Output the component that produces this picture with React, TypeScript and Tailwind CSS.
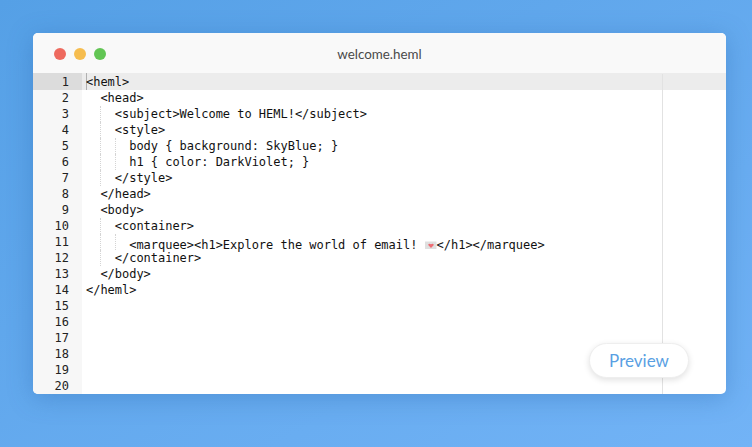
const mono = "font-['DejaVu_Sans_Mono',monospace]";

const lines: { indent: number; text: string; shift?: boolean; emoji?: string }[] = [
  { indent: 0, text: '<heml>' },
  { indent: 1, text: '<head>' },
  { indent: 2, text: '<subject>Welcome to HEML!</subject>' },
  { indent: 2, text: '<style>' },
  { indent: 3, text: 'body { background: SkyBlue; }' },
  { indent: 3, text: 'h1 { color: DarkViolet; }' },
  { indent: 2, text: '</style>' },
  { indent: 1, text: '</head>' },
  { indent: 1, text: '<body>' },
  { indent: 2, text: '<container>' },
  { indent: 3, text: '<marquee><h1>Explore the world of email! ', shift: true, emoji: '</h1></marquee>' },
  { indent: 2, text: '</container>' },
  { indent: 1, text: '</body>' },
  { indent: 0, text: '</heml>' },
];

const numbers = Array.from({ length: 20 }, (_, i) => i + 1);

function LoveLetter() {
  return (
    <svg width="12" height="9" viewBox="0 0 12 9" className="inline-block align-[-1px]">
      <rect x="0" y="0.5" width="11.5" height="7.5" fill="#dfdfdf" />
      <path d="M6 7 3.4 4.2c-.7-1 1-2.3 2.6-.9 1.6-1.4 3.3-.1 2.6.9z" fill="#ee6b73" />
    </svg>
  );
}

function CodeLine({ indent, text, shift, emoji }: (typeof lines)[number]) {
  return (
    <div className="flex h-4 items-stretch pl-1 whitespace-pre">
      {Array.from({ length: indent }, (_, i) => (
        <span
          key={i}
          className={i === 0 ? 'w-[14.4px] shrink-0' : 'w-[14.4px] shrink-0 border-l border-dotted border-[#d4d4d4]'}
        />
      ))}
      <span className={shift ? 'relative top-[3px]' : ''}>
        {text}
        {emoji && <LoveLetter />}
        {emoji}
      </span>
    </div>
  );
}

export default function App() {
  return (
    <div className="flex h-[447px] w-[752px] overflow-hidden bg-gradient-to-br from-[#55a0e6] to-[#72b3f6] pt-[33px] pl-[33px]">
      <div className="relative h-[361px] w-[693px] overflow-hidden rounded-[5px] bg-white shadow-[0_4px_24px_rgba(40,100,170,0.35)]">
        {/* TITLE BAR */}
        <div className="relative flex h-10 items-center justify-center bg-[#f9f9f9]">
          <div className="absolute top-[15px] left-[21px] flex gap-2">
            <span className="h-3 w-3 rounded-full bg-[#ee6a5f]" />
            <span className="h-3 w-3 rounded-full bg-[#f6bd4f]" />
            <span className="h-3 w-3 rounded-full bg-[#62c554]" />
          </div>
          <span className="pt-[3px] font-['Lato',sans-serif] text-[13.4px] text-[#4a4a4a]">welcome.heml</span>
        </div>

        {/* EDITOR */}
        <div className={`relative flex text-[12px] leading-4 tracking-[-0.02px] text-[#111111] ${mono}`}>
          <div className="absolute top-0 right-0 left-0 h-[17px] bg-[#ececec]" />
          <div className="absolute top-0 left-[53px] h-[17px] w-px bg-[#b0b0b0]" />
          <div className="absolute top-px bottom-0 left-[629px] w-px bg-[#e2e2e2]" />

          <div className="relative w-[49px] shrink-0 bg-[#f7f7f7] pt-px pr-[13px] text-right text-[#222222]">
            <div className="absolute top-0 right-0 left-0 h-[17px] bg-[#dcdcdc]" />
            {numbers.map((n) => (
              <div key={n} className="relative h-4">
                {n}
              </div>
            ))}
          </div>

          <div className="relative flex-1 pt-px">
            {lines.map((line, i) => (
              <CodeLine key={i} {...line} />
            ))}
          </div>
        </div>

        {/* PREVIEW BUTTON */}
        <button className="absolute top-[310px] left-[556px] flex h-[35px] w-[100px] items-center justify-center rounded-full border border-[#eeeeee] bg-white font-['Lato',sans-serif] text-[17px] text-[#5a9fe3] shadow-[0_2px_6px_rgba(0,0,0,0.12)]">
          Preview
        </button>
      </div>
    </div>
  );
}
